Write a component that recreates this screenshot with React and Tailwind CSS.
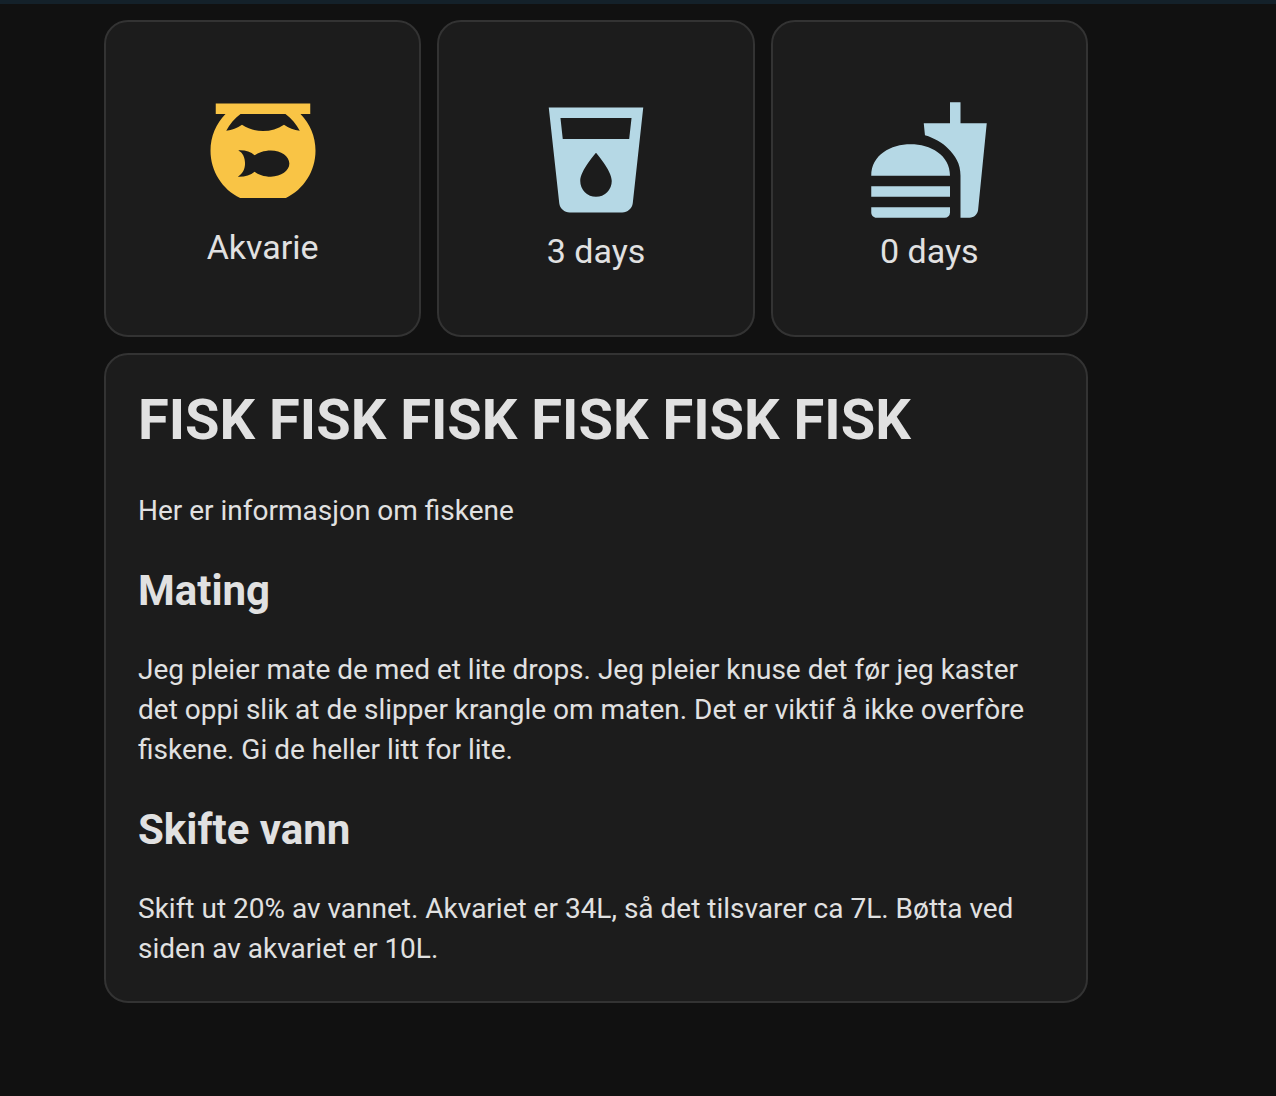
import React from "react";

function FishbowlIcon() {
  return (
    <svg viewBox="0 0 24 24" className="size-[126px] text-[#f9c445]" fill="currentColor" fillRule="evenodd" aria-hidden="true">
      <path d="M3 2V4H4.86C3.09 5.81 2 8.28 2 11C2 14.92 4.26 18.36 7.64 20H16.36C19.74 18.36 22 14.92 22 11C22 8.28 20.91 5.81 19.14 4H21V2H3M7.72 4H16.28C17.4 4.8 18.35 5.9 19 7.2C17.9 7.1 16.9 6.7 16 6.05C14.8 6.85 13.5 7.25 12 7.25C10.5 7.25 9.2 6.85 8 6.05C7.1 6.7 6.1 7.1 5 7.2C5.65 5.9 6.6 4.8 7.72 4M13.5 10.93C15.45 10.93 17.02 12.05 17.02 13.43C17.02 14.8 15.45 15.93 13.5 15.93C12.2 15.93 11.05 15.5 10.4 14.98C9.6 15.65 8.5 15.98 7.2 15.93C8.1 15.4 8.58 14.5 8.58 13.43C8.58 12.3 8.15 11.3 7.3 10.93C8.5 10.85 9.65 11.15 10.4 11.87C11.05 11.35 12.2 10.93 13.5 10.93Z" />
    </svg>
  );
}

function CupWaterIcon() {
  return (
    <svg viewBox="0 0 24 24" className="size-[126px] text-[#b5d8e5]" fill="currentColor" fillRule="evenodd" aria-hidden="true">
      <path d="M18.32 8H5.67L5.23 4H18.77M12 19A3 3 0 0 1 9 16C9 14 12 10.6 12 10.6S15 14 15 16A3 3 0 0 1 12 19M3 2L5 20.23C5.13 21.23 5.97 22 7 22H17C18 22 18.87 21.23 19 20.23L21 2H3Z" />
    </svg>
  );
}

function FoodIcon() {
  return (
    <svg viewBox="0 0 24 24" className="size-[126px] text-[#b5d8e5]" fill="currentColor" aria-hidden="true">
      <path d="M1 22C1 22.54 1.45 23 2 23H15A1 1 0 0 0 16 22V21H1V22M8.5 9C4.75 9 1 11 1 15H16C16 11 12.25 9 8.5 9M1 17H16V19H1V17M18 5V1H16V5H11L11.23 7.3C13 7.8 14.61 8.79 15.57 9.74C17 11.15 18 12.61 18 15V23H19.72C20.56 23 21.25 22.35 21.35 21.53L23 5H18Z" />
    </svg>
  );
}

function Tile({ icon, label, className }) {
  return (
    <button
      type="button"
      className={`flex aspect-square flex-col items-center rounded-3xl border-2 border-[#333] bg-[#1c1c1c] ${className}`}
    >
      {icon}
      <span className="mt-2 text-[34px] leading-10">{label}</span>
    </button>
  );
}

export default function App() {
  return (
    <div className="min-h-screen border-t-4 border-[#14212a] bg-[#111] pt-4 pr-47 pb-8 pl-26 font-['Roboto',sans-serif] text-[#e1e1e1]">
      <main className="flex flex-col gap-4">
        <div className="grid grid-cols-3 gap-4">
          <Tile icon={<FishbowlIcon />} label="Akvarie" className="pt-[71px]" />
          <Tile icon={<CupWaterIcon />} label="3 days" className="pt-[75px]" />
          <Tile icon={<FoodIcon />} label="0 days" className="pt-[75px]" />
        </div>
        <article className="rounded-3xl border-2 border-[#333] bg-[#1c1c1c] p-8 text-[28px] leading-10">
          <h1 className="mb-[38px] text-[56px] leading-[66px] font-bold">FISK FISK FISK FISK FISK FISK</h1>
          <p>Her er informasjon om fiskene</p>
          <h2 className="my-[35px] text-[42px] leading-[49px] font-bold">Mating</h2>
          <p>
            Jeg pleier mate de med et lite drops. Jeg pleier knuse det før jeg kaster det oppi slik at de slipper
            krangle om maten. Det er viktif å ikke overfòre fiskene. Gi de heller litt for lite.
          </p>
          <h2 className="my-[35px] text-[42px] leading-[49px] font-bold">Skifte vann</h2>
          <p>
            Skift ut 20% av vannet. Akvariet er 34L, så det tilsvarer ca 7L. Bøtta ved siden av akvariet er 10L.
          </p>
        </article>
      </main>
    </div>
  );
}
